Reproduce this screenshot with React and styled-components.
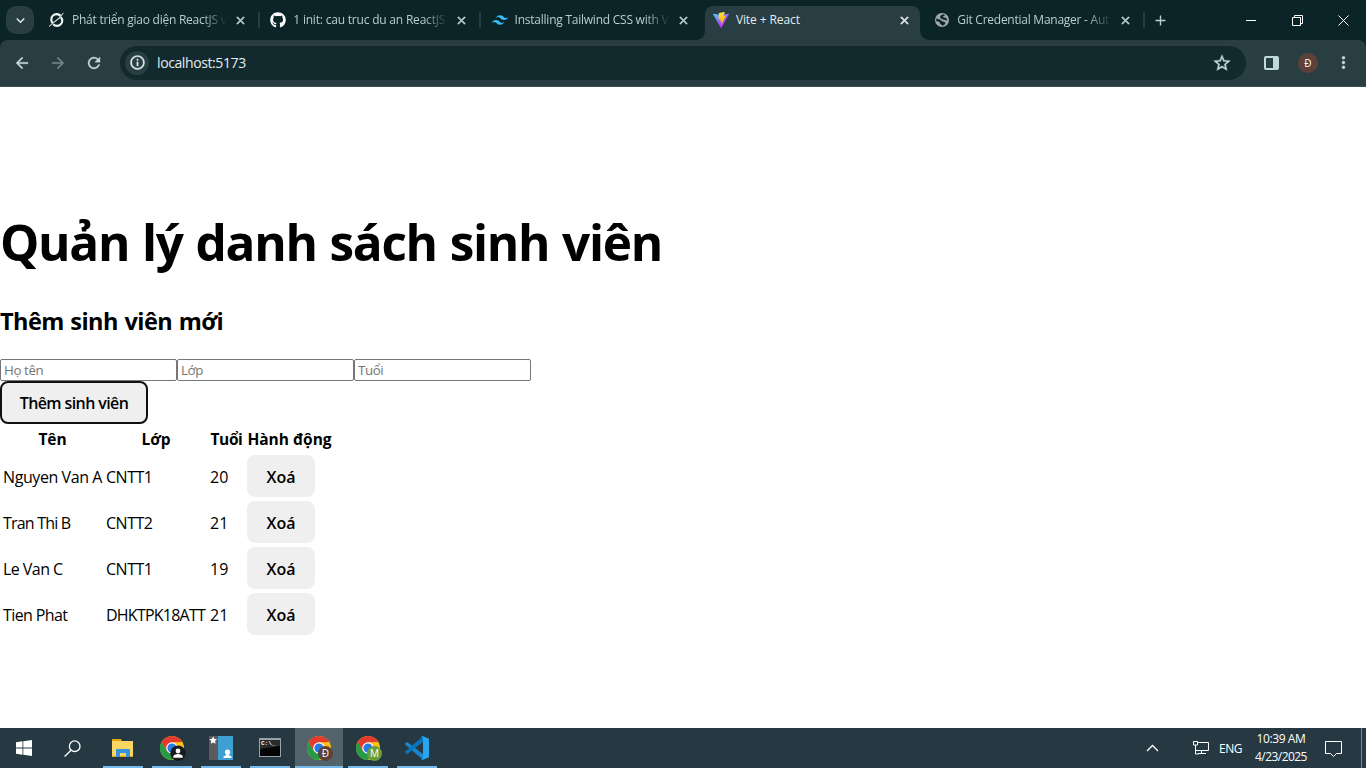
import React from "react";
import styled, { createGlobalStyle } from "styled-components";
import { FaGithub } from "react-icons/fa";
import { SiTailwindcss } from "react-icons/si";
import { MdClose, MdAdd, MdArrowBack, MdArrowForward, MdRefresh, MdStarBorder, MdMoreVert, MdKeyboardArrowDown, MdInfoOutline } from "react-icons/md";

const GlobalStyle = createGlobalStyle`
  * { box-sizing: border-box; }
  body { margin: 0; background: #fff; overflow: hidden; font-family: "Open Sans", "Noto Sans", sans-serif; }
`;

const Screen = styled.div`
  display: flex;
  flex-direction: column;
  width: 1366px;
  height: 768px;
`;

/* ---------- Browser ---------- */
const TabStrip = styled.div`
  display: flex;
  height: 40px;
  background: #0b2428;
`;
const TabSearch = styled.div`
  display: flex;
  align-items: center;
  justify-content: center;
  width: 28px;
  height: 28px;
  margin: 6px 7px 0 6px;
  border-radius: 10px;
  background: #283e43;
  color: #e4eded;
`;
const Tab = styled.div`
  position: relative;
  display: flex;
  flex: none;
  align-items: center;
  width: 221.3px;
  height: 40px;
  padding-left: 8px;
  color: ${(p) => (p.$active ? "#e4eded" : "#b5ced0")};
`;
const ActiveShape = styled.svg`
  position: absolute;
  left: -10px;
  top: 6px;
`;
const TabIcon = styled.span`
  position: relative;
  display: flex;
  width: 16px;
  height: 16px;
`;
const TabTitle = styled.span`
  position: relative;
  width: 154px;
  margin-left: 7px;
  overflow: hidden;
  white-space: nowrap;
  font-size: 12px;
  line-height: 20px;
  letter-spacing: ${(p) => p.$ls || 0}px;
  ${(p) => p.$fade && "mask-image: linear-gradient(to right, #000 130px, transparent 155px);"}
`;
const TabClose = styled.span`
  position: relative;
  display: flex;
  margin-left: 8px;
  svg { stroke-width: 1.4; }
  path[fill="none"] { stroke: none; }
`;
const TabDivider = styled.span`
  width: 2px;
  height: 16px;
  margin-left: 11px;
  background: #283e43;
`;
const NewTab = styled.div`
  display: flex;
  align-items: center;
  margin-left: 5px;
  color: #b5ced0;
`;
const WindowControls = styled.div`
  display: flex;
  align-items: center;
  margin-left: auto;
`;
const WindowButton = styled.span`
  display: flex;
  align-items: center;
  justify-content: center;
  width: 46px;
  height: 40px;
`;
const ToolbarBack = styled.div`
  background: #0b2428;
  height: 47px;
`;
const Toolbar = styled.div`
  display: flex;
  align-items: center;
  height: 47px;
  padding: 0 0 1px 14px;
  background: #283e43;
  border-bottom: 1px solid #3c5054;
  border-radius: 8px 8px 0 0;
  color: #c2d9db;
  svg { stroke-width: 0.4; }
  path[fill="none"] { stroke: none; }
`;
const NavButton = styled.span`
  display: flex;
  justify-content: center;
  width: 16px;
  margin-right: 20px;
  opacity: ${(p) => (p.$off ? 0.45 : 1)};
  svg { flex: none; }
`;
const AddressBar = styled.div`
  display: flex;
  align-items: center;
  width: 1126px;
  height: 34px;
  margin-left: -2px;
  padding: 0 14px 0 5px;
  border-radius: 17px;
  background: #12292d;
`;
const SiteInfo = styled.span`
  display: flex;
  align-items: center;
  justify-content: center;
  width: 24px;
  height: 24px;
  border-radius: 12px;
  background: #283e43;
  color: #e4eded;
`;
const Url = styled.span`
  flex: 1;
  margin-left: 8px;
  font-size: 14px;
  line-height: 20px;
  letter-spacing: -0.4px;
  color: #e4eded;
`;
const SidePanel = styled.span`
  width: 15px;
  height: 14px;
  margin-left: 18px;
  border: 2px solid #c2d9db;
  border-right-width: 6px;
  border-radius: 2px;
`;
const Profile = styled.span`
  width: 20px;
  height: 20px;
  margin-left: 19px;
  border-radius: 10px;
  background: #5d4037;
  color: #fff;
  font-size: 10px;
  line-height: 20px;
  text-align: center;
`;
const Menu = styled.span`
  display: flex;
  margin-left: 16px;
`;

/* ---------- Page ---------- */
const Page = styled.main`
  flex: 1;
  padding-top: 91px;
  background: #fff;
  color: #000;
`;
const Title = styled.h1`
  margin: 36px 0 32px;
  font-size: 49.5px;
  line-height: 57px;
  letter-spacing: -1.3px;
  word-spacing: 1.3px;
  font-weight: 700;
`;
const Subtitle = styled.h2`
  margin: 0 0 20px;
  font-size: 23.5px;
  line-height: 36px;
  font-weight: 700;
  letter-spacing: -0.55px;
  word-spacing: 1px;
`;
const Fields = styled.div`
  display: flex;
`;
const Field = styled.input`
  width: 177px;
  height: 22px;
  padding: 1px 2px 1px 3px;
  border: 1px solid #767676;
  border-radius: 2px;
  font: 13.33px "Open Sans", sans-serif;
  letter-spacing: -0.4px;
  &::placeholder { color: #757575; opacity: 1; }
`;
const Button = styled.button`
  display: block;
  width: ${(p) => p.$w}px;
  height: ${(p) => p.$h}px;
  padding: ${(p) => (p.$focused ? 1 : 1)}px 0 0;
  border: ${(p) => (p.$focused ? "2px solid #101010" : "0")};
  border-radius: 8px;
  background: #efefef;
  color: #000;
  font: 600 16px "Open Sans", sans-serif;
  letter-spacing: ${(p) => p.$ls || 0}px;
`;
const Table = styled.table`
  width: 335px;
  table-layout: fixed;
  border-spacing: 2px;
  font-size: 16px;
  line-height: 24px;
`;
const Col = styled.col`
  width: ${(p) => p.$w}px;
`;
const Head = styled.th`
  height: 26px;
  padding: 1px;
  white-space: nowrap;
  font-weight: 700;
  font-size: 15.5px;
  letter-spacing: ${(p) => p.$ls || 0}px;
`;
const Cell = styled.td`
  height: 44px;
  padding: ${(p) => (p.$action ? "1px" : "3px 1px 1px")};
  white-space: nowrap;
  letter-spacing: ${(p) => p.$ls || 0}px;
`;

/* ---------- Taskbar ---------- */
const Taskbar = styled.footer`
  display: flex;
  height: 40px;
  background: #263842;
  color: #fff;
`;
const SystemButton = styled.div`
  display: flex;
  align-items: center;
  justify-content: center;
  width: 48px;
`;
const Apps = styled.div`
  display: flex;
  gap: 1px;
  margin-left: 3px;
`;
const AppButton = styled.div`
  display: flex;
  flex-direction: column;
  align-items: center;
  justify-content: space-between;
  width: 48px;
  height: 40px;
  padding-top: 7px;
  background: ${(p) => (p.$active ? "#52636b" : "transparent")};
  &::after {
    content: "";
    width: ${(p) => (p.$active ? 48 : 40)}px;
    height: 2px;
    background: #76b9ed;
  }
`;
const Tray = styled.div`
  display: flex;
  align-items: center;
  margin-left: auto;
  font-size: 12px;
`;
const Language = styled.span`
  margin-left: 9px;
  width: 24px;
  letter-spacing: -0.5px;
`;
const Clock = styled.div`
  width: 60px;
  margin: 0 14px 0 8px;
  text-align: center;
  line-height: 18px;
  white-space: nowrap;
  letter-spacing: -0.55px;
`;
const Time = styled.div`
  letter-spacing: -0.4px;
`;
const ShowDesktop = styled.span`
  width: 5px;
  height: 40px;
  margin-left: 19px;
  border-left: 1px solid #7b878d;
`;

const SlashRing = () => (
  <svg width="16" height="16" viewBox="0 0 16 16" fill="none" stroke="#f1f5f5">
    <path d="M11.5 3.8A5 5 0 0 0 3.700 11M11.900 5.200A5 5 0 0 1 4.200 12.200" strokeWidth="2.100" />
    <path d="M-.8 15.300 4.500 10.200 9.300 6.500 14.400.800 11 6 6 9.700Z" fill="#f1f5f5" strokeWidth=".5" />
  </svg>
);

const Globe = () => (
  <svg width="16" height="16" viewBox="0 0 16 16">
    <circle cx="8" cy="8" r="7" fill="#a2a9ac" />
    <path d="M8.500 2.500 6.300 4.300 6.500 6 9 7.200 12.800 8.200 12.500 6.500 9.600 5.600 8.400 4.600 10.800 3.200ZM2.600 6.800 2.500 9 5.500 9.600 6.200 11.500 8.500 13.500 11 12 10.800 10.300 8 9.600 6.300 8Z" fill="#0b2428" stroke="#0b2428" strokeWidth=".5" />
  </svg>
);

const ViteLogo = () => (
  <svg width="16" height="16" viewBox="0 0 256 257">
    <defs>
      <linearGradient id="viteA" x1="-.8%" x2="57.6%" y1="7.6%" y2="78.4%">
        <stop offset="0%" stopColor="#41D1FF" /><stop offset="100%" stopColor="#BD34FE" />
      </linearGradient>
      <linearGradient id="viteB" x1="43.4%" x2="50.3%" y1="2.2%" y2="89%">
        <stop offset="0%" stopColor="#FFEA83" /><stop offset="8.3%" stopColor="#FFDD35" /><stop offset="100%" stopColor="#FFA800" />
      </linearGradient>
    </defs>
    <path fill="url(#viteA)" d="M255.153 37.938 134.897 252.976c-2.483 4.44-8.862 4.466-11.382.048L.875 37.958c-2.746-4.814 1.371-10.646 6.827-9.67l120.385 21.517a6.537 6.537 0 0 0 2.322-.004l117.867-21.483c5.438-.991 9.574 4.796 6.877 9.62Z" />
    <path fill="url(#viteB)" d="M185.432.063 96.44 17.501a3.268 3.268 0 0 0-2.634 3.014l-5.474 92.456a3.268 3.268 0 0 0 3.997 3.378l24.777-5.718c2.318-.535 4.413 1.507 3.936 3.838l-7.361 36.047c-.495 2.426 1.782 4.5 4.151 3.78l15.304-4.649c2.372-.72 4.652 1.36 4.15 3.788l-11.698 56.621c-.732 3.542 3.979 5.473 5.943 2.437l1.313-2.028 72.516-144.72c1.215-2.423-.88-5.186-3.54-4.672l-25.505 4.922c-2.396.462-4.435-1.77-3.759-4.114l16.646-57.705c.677-2.35-1.37-4.583-3.769-4.113Z" />
  </svg>
);

const BadgeLetter = styled.span`
  position: absolute;
  left: 11px;
  top: 11px;
  width: 15px;
  height: 15px;
  border-radius: 8px;
  background: ${(p) => p.$bg};
  color: #fff;
  font-size: 10px;
  line-height: 15px;
  text-align: center;
`;
const BadgeHost = styled.span`
  position: relative;
  left: ${(p) => p.$shift || 0}px;
  display: flex;
`;

const Chrome = ({ letter, bg }) => (
  <BadgeHost $shift={1}>
    <svg width="26" height="26" viewBox="0 0 26 26">
      <circle cx="12" cy="13" r="12" fill="#fbc116" />
      <path d="M1.600 7A12 12 0 0 0 12 25L17.200 16 12 13 6.800 16Z" fill="#259b48" />
      <path d="M1.600 7A12 12 0 0 1 22.400 7L12 7.200 6.800 16Z" fill="#e33b2e" />
      <circle cx="12" cy="13" r="5.800" fill="#fff" />
      <circle cx="12" cy="13" r="4.600" fill="#2878e8" />
      {!letter && (
        <g>
          <circle cx="18" cy="18.300" r="7.700" fill="#171b1e" />
          <circle cx="18" cy="16" r="2.400" fill="#fff" />
          <path d="M13.300 22.800v-1.200c0-3.400 9.400-3.400 9.400 0v1.200z" fill="#fff" />
        </g>
      )}
    </svg>
    {letter && <BadgeLetter $bg={bg}>{letter}</BadgeLetter>}
  </BadgeHost>
);

const Explorer = () => (
  <svg width="24" height="26" viewBox="0 0 24 26">
    <path d="M1 4h9l1 2h11v16H1z" fill="#e5a50f" />
    <path d="M1 6h21v15H1z" fill="#fcd462" />
    <path d="M5 22v-7q0-1 1-1h12q1 0 1 1v7h-4v-4H9v4z" fill="#3493df" />
  </svg>
);

const ContactsApp = () => (
  <svg width="24" height="26" viewBox="0 0 24 26">
    <path d="M0 1h9v24H0z" fill="#595b5d" />
    <path d="M9 1h15v24H9z" fill="#3e9fd5" />
    <path d="m4.200 1.500 1.200 2.300 2.600.4-1.900 1.800.5 2.700-2.400-1.300-2.400 1.300.5-2.700L.4 4.200 3 3.800z" fill="#fff" />
    <circle cx="18.500" cy="17" r="2.600" fill="#fff" />
    <path d="M14.500 23v-1.500l2.800-1.500v-2h2.400v2l2.800 1.500V23z" fill="#fff" />
  </svg>
);

const PromptText = styled.span`
  position: absolute;
  left: 3px;
  top: 5px;
  color: #fff;
  font: 700 6px/8px "Liberation Mono", monospace;
  white-space: nowrap;
`;
const Terminal = () => (
  <BadgeHost>
    <svg width="24" height="26" viewBox="0 0 24 26">
      <path d="M1 3h22v19H1z" fill="#9ba2a6" />
      <path d="M2 5h20v16H2z" fill="#050505" />
      <path d="M2 5h20v6L2 14z" fill="#292b2c" />
    </svg>
    <PromptText>C:\_</PromptText>
  </BadgeHost>
);

const Code = () => (
  <svg width="26" height="26" viewBox="0 0 26 26">
    <path d="M1 8.700 2.600 7.300q.5-.4 1 0L19 19v5.800L1.200 9.600q-.5-.4-.2-.9Z" fill="#1687ce" />
    <path d="M1 17.300 2.600 18.700q.5.400 1 0L19 7V1.200L1.200 16.400q-.5.400-.2.900Z" fill="#0873bd" />
    <path d="M18.500 1 25 3.700v18.600L18.500 25q-.8 0-1-.8L19 23V3L17.500 1.800q.2-.8 1-.8Z" fill="#29a4ef" />
  </svg>
);

const tabs = [
  { title: "Phát triển giao diện ReactJS v", icon: <SlashRing />, ls: -0.25, divider: true },
  { title: "1 init: cau truc du an ReactJS", icon: <FaGithub size={16} color="#fff" />, ls: -0.2, divider: true },
  { title: "Installing Tailwind CSS with V", icon: <SiTailwindcss size={16} color="#38bdf8" />, ls: -0.24 },
  { title: "Vite + React", icon: <ViteLogo />, ls: -0.1, active: true },
  { title: "Git Credential Manager - Aut", icon: <Globe />, ls: -0.25, divider: true },
];

const students = [
  { name: "Nguyen Van A", group: "CNTT1", age: 20, nameLs: -0.42, groupLs: -0.5 },
  { name: "Tran Thi B", group: "CNTT2", age: 21, nameLs: -0.8, groupLs: -0.5 },
  { name: "Le Van C", group: "CNTT1", age: 19, nameLs: -0.55, groupLs: -0.5 },
  { name: "Tien Phat", group: "DHKTPK18ATT", age: 21, nameLs: -0.6, groupLs: -0.77 },
];

const BrowserTab = ({ title, icon, ls, active, divider }) => (
  <Tab $active={active}>
    {active && (
      <ActiveShape width="235" height="34" viewBox="0 0 235 34">
        <path d="M0 34Q10 34 10 23V9Q10 0 19 0H216Q225 0 225 9V23Q225 34 235 34Z" fill="#283e43" />
      </ActiveShape>
    )}
    <TabIcon>{icon}</TabIcon>
    <TabTitle $ls={ls} $fade={!active}>{title}</TabTitle>
    <TabClose><MdClose size={13} stroke="currentColor" /></TabClose>
    {divider && <TabDivider />}
  </Tab>
);

export default function App() {
  return (
    <Screen>
      <GlobalStyle />
      <TabStrip>
        <TabSearch><MdKeyboardArrowDown size={17} /></TabSearch>
        {tabs.map((tab) => <BrowserTab key={tab.title} {...tab} />)}
        <NewTab><MdAdd size={17} /></NewTab>
        <WindowControls>
          <WindowButton><svg width="10" height="10"><path d="M0 5.500h10" stroke="#fff" /></svg></WindowButton>
          <WindowButton>
            <svg width="11" height="11" fill="none" stroke="#fff"><path d="M.5 2.500h8v8h-8zM2.500 2.500v-2h8v8h-2" /></svg>
          </WindowButton>
          <WindowButton><svg width="11" height="11" stroke="#fff"><path d="m.5.5 10 10M10.500.5l-10 10" /></svg></WindowButton>
        </WindowControls>
      </TabStrip>
      <ToolbarBack>
        <Toolbar>
          <NavButton><MdArrowBack size={18} /></NavButton>
          <NavButton $off><MdArrowForward size={18} /></NavButton>
          <NavButton><MdRefresh size={18} /></NavButton>
          <AddressBar>
            <SiteInfo><MdInfoOutline size={17} /></SiteInfo>
            <Url>localhost:5173</Url>
            <MdStarBorder size={20} />
          </AddressBar>
          <SidePanel />
          <Profile>Đ</Profile>
          <Menu><MdMoreVert size={19} /></Menu>
        </Toolbar>
      </ToolbarBack>

      <Page>
        <Title>Quản lý danh sách sinh viên</Title>
        <Subtitle>Thêm sinh viên mới</Subtitle>
        <Fields>
          <Field placeholder="Họ tên" />
          <Field placeholder="Lớp" />
          <Field placeholder="Tuổi" />
        </Fields>
        <Button $w={148} $h={43} $ls={-0.6} $focused>Thêm sinh viên</Button>
        <Table>
          <colgroup><Col $w={101} /><Col $w={102} /><Col $w={35} /><Col $w={87} /></colgroup>
          <thead>
            <tr><Head $ls={-0.1}>Tên</Head><Head $ls={-0.1}>Lớp</Head><Head $ls={-0.4}>Tuổi</Head><Head>Hành động</Head></tr>
          </thead>
          <tbody>
            {students.map((s) => (
              <tr key={s.name}>
                <Cell $ls={s.nameLs}>{s.name}</Cell>
                <Cell $ls={s.groupLs}>{s.group}</Cell>
                <Cell>{s.age}</Cell>
                <Cell $action><Button $w={68} $h={42}>Xoá</Button></Cell>
              </tr>
            ))}
          </tbody>
        </Table>
      </Page>

      <Taskbar>
        <SystemButton>
          <svg width="16" height="16" viewBox="0 0 16 16" fill="#fff"><path d="M0 2.200 6.500 1.300v6.300H0zM7.300 1.200 16 0v7.600H7.300zM0 8.400h6.500v6.300L0 13.800zM7.300 8.400H16V16l-8.700-1.200z" /></svg>
        </SystemButton>
        <SystemButton>
          <svg width="17" height="17" fill="none" stroke="#fff" strokeWidth="1.300"><circle cx="10.700" cy="6.200" r="5.300" /><path d="M7 10.200.6 16.500" /></svg>
        </SystemButton>
        <Apps>
          <AppButton><Explorer /></AppButton>
          <AppButton><Chrome /></AppButton>
          <AppButton><ContactsApp /></AppButton>
          <AppButton><Terminal /></AppButton>
          <AppButton $active><Chrome letter="Đ" bg="#5d4037" /></AppButton>
          <AppButton><Chrome letter="M" bg="#689f38" /></AppButton>
          <AppButton><Code /></AppButton>
        </Apps>
        <Tray>
          <svg width="64" height="18" fill="none" stroke="#fff">
            <path d="m1 12 5.500-5.500L12 12" strokeWidth="1.300" />
            <path d="M52 3.500h10.500v8H49.500V7M55.500 11.500v3M52 14.500h8M47.500 2.500h4v3.500h-4zM49.500 6v9h3" />
          </svg>
          <Language>ENG</Language>
          <Clock><Time>10:39 AM</Time>4/23/2025</Clock>
          <svg width="17" height="17" fill="none" stroke="#fff"><path d="M.5 1.500h16v12h-5l-3 3-3-3h-5z" /></svg>
          <ShowDesktop />
        </Tray>
      </Taskbar>
    </Screen>
  );
}
